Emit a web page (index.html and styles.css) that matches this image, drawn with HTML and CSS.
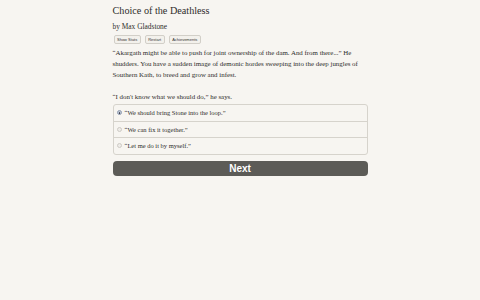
FILE: index.html
```html
<!DOCTYPE html>
<html>
<head>
<meta charset="utf-8">
<link rel="stylesheet" href="styles.css">
</head>
<body>
<div class="page">
  <h1 class="title">Choice of the Deathless</h1>
  <div class="author">by Max Gladstone</div>
  <div class="buttons">
    <button class="small">Show Stats</button>
    <button class="small">Restart</button>
    <button class="small">Achievements</button>
  </div>
  <p class="text">“Akargath might be able to push for joint ownership of the dam. And from there...” He shudders. You have a sudden image of demonic hordes sweeping into the deep jungles of Southern Kath, to breed and grow and infest.</p>
  <p class="text">“I don't know what we should do,” he says.</p>
  <div class="choices">
    <label class="choice"><span class="radio checked"></span>“We should bring Stone into the loop.”</label>
    <label class="choice"><span class="radio"></span>“We can fix it together.”</label>
    <label class="choice"><span class="radio"></span>“Let me do it by myself.”</label>
  </div>
  <button class="next">Next</button>
</div>
</body>
</html>
```

FILE: styles.css
```css
html, body {
  margin: 0;
  padding: 0;
  background: #f7f5f1;
}
.page {
  width: 255px;
  margin: 0 auto;
  padding-top: 3px;
  font-family: "Liberation Serif", "DejaVu Serif", serif;
  color: #2e2d2b;
}
.title {
  font-size: 10.2px;
  font-weight: normal;
  margin: 0;
  line-height: 15px;
}
.author {
  font-size: 7.4px;
  line-height: 10px;
  margin-top: 4px;
}
.buttons {
  display: flex;
  gap: 4px;
  margin-top: 3px;
  margin-left: 1px;
}
.small {
  font-family: "Liberation Sans", Arial, sans-serif;
  font-size: 4px;
  line-height: 5px;
  padding: 1px 2.5px;
  background: #f3f1ec;
  border: 1px solid #d2cfc8;
  border-radius: 2px;
  color: #333;
}
.text {
  font-size: 6.9px;
  line-height: 11px;
  margin: 3px 0 0 0;
}
.text + .text {
  margin-top: 11px;
}
.choices {
  margin-top: 2px;
  border: 1px solid #d6d3cc;
  border-radius: 3px;
  background: #f7f5f1;
}
.choice {
  display: flex;
  align-items: center;
  height: 15.5px;
  font-size: 6.5px;
  padding-left: 3px;
  border-top: 1px solid #d6d3cc;
}
.choice:first-child {
  border-top: none;
}
.radio {
  width: 5px;
  height: 5px;
  border-radius: 50%;
  border: 1px solid #cdcac4;
  background: #eeece8;
  margin-right: 3px;
  box-sizing: border-box;
  position: relative;
}
.radio.checked {
  background: #bcc6d4;
  border-color: #939fb3;
}
.radio.checked::after {
  content: "";
  position: absolute;
  left: 1px;
  top: 1px;
  width: 1.5px;
  height: 1.5px;
  border-radius: 50%;
  background: #334;
}
.next {
  display: block;
  width: 100%;
  margin-top: 6px;
  height: 15px;
  border: none;
  border-radius: 4px;
  background: #5c5b57;
  color: #fff;
  font-family: "Liberation Sans", Arial, sans-serif;
  font-weight: bold;
  font-size: 10px;
  padding: 0;
}
```
